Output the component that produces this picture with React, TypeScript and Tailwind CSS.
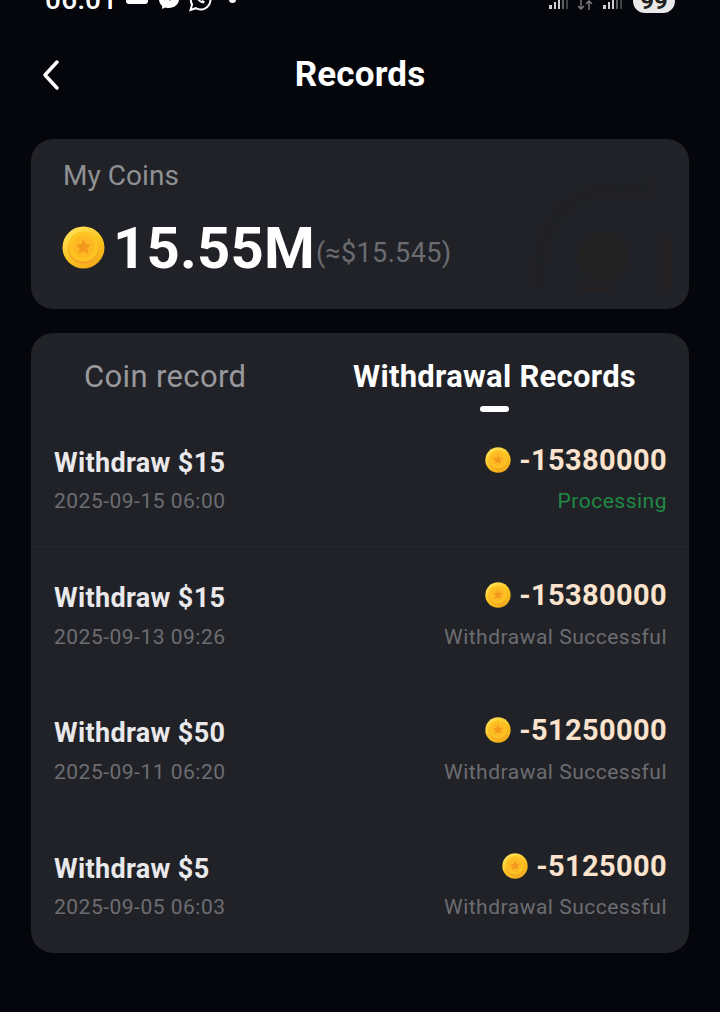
import React, { useId } from "react";

function Coin({ size }: { size: number }) {
  const id = useId().replace(/:/g, "");
  return (
    <svg width={size} height={size} viewBox="0 0 44 44" className="shrink-0">
      <defs>
        <linearGradient id={`${id}a`} x1="0.2" y1="0" x2="0.8" y2="1">
          <stop offset="0" stopColor="#ffe45c" />
          <stop offset="0.55" stopColor="#fbc21f" />
          <stop offset="1" stopColor="#f0a818" />
        </linearGradient>
      </defs>
      <circle cx="22" cy="22" r="21.5" fill={`url(#${id}a)`} />
      <circle cx="22" cy="22.500" r="16" fill="#f59f2b" />
      <circle cx="22" cy="21" r="15.500" fill="#fcc321" />
      <circle cx="22" cy="21" r="11" fill="#fdb824" />
      <path d="M22 13.500l2.400 5 5.500.7-4 3.800 1 5.400-4.900-2.600-4.900 2.600 1-5.400-4-3.800 5.500-.7z" fill="#f3981c" />
    </svg>
  );
}

function Row({ title, date, amount, status, green, h, gap, gapRight }: { title: string; date: string; amount: string; status: string; green?: boolean; h: string; gap: string; gapRight: string }) {
  return (
    <div className={`flex justify-between pl-[23px] pr-[22px] border-b border-[#26272c] last:border-b-0 ${h}`}>
      <div className="flex flex-col pt-[33px]">
        <span className="text-[27px] leading-[36px] font-bold text-[#e9e9ec] tracking-[0.35px]">{title}</span>
        <span className={`text-[21px] leading-[28px] text-[#6c6d72] tracking-[0.5px] ${gap}`}>{date}</span>
      </div>
      <div className="flex flex-col items-end pt-[30px]">
        <div className="flex items-center gap-[8px] h-[36px]">
          <Coin size={26} />
          <span className="text-[29px] leading-[36px] font-bold text-[#fbe3cd] tracking-[0.35px]">{amount}</span>
        </div>
        <span className={`text-[21px] leading-[28px] tracking-[0.5px] ${gapRight} ${green ? "text-[#1f8a45]" : "text-[#6c6d72]"}`}>{status}</span>
      </div>
    </div>
  );
}

function Signal() {
  return (
    <svg width="19" height="9" viewBox="0 0 19 9" fill="#d0d0d2">
      <rect x="0" y="5" width="3" height="4" />
      <rect x="5" y="2" width="2" height="7" />
      <rect x="9" y="0" width="2" height="9" />
      <rect x="13" y="0" width="2" height="9" opacity=".45" />
      <rect x="17" y="0" width="2" height="9" opacity=".3" />
    </svg>
  );
}

export default function App() {
  return (
    <div className="w-[720px] h-[1012px] overflow-hidden bg-[#05060c] font-['Roboto',sans-serif]">
      <div className="h-[13px] overflow-hidden flex items-start justify-between pl-[45px] pr-[45px]">
        <div className="flex items-start h-[13px]">
          <span className="text-[28px] leading-[30px] font-medium text-white mt-[-15px] tracking-[0.3px] w-[80px]">06:01</span>
          <span className="w-[22px] h-[12px] bg-white rounded-[3px] mt-[-8px] ml-[1px]" />
          <svg width="22" height="22" viewBox="0 0 24 24" fill="white" className="mt-[-12px] ml-[10px]">
            <path d="M12 1C5.800 1 1 5.500 1 11.700c0 3.200 1.300 6 3.500 7.900v3.400l3.300-1.800c1.300.4 2.700.6 4.200.6 6.200 0 11-4.500 11-10.100S18.200 1 12 1z" />
            <path d="M6 14l5-5 3 2.500L18 9l-5 5-3-2.500z" fill="#05060c" />
          </svg>
          <svg width="24" height="24" viewBox="0 0 24 24" fill="none" stroke="white" strokeWidth="2" className="mt-[-12px] ml-[8px]">
            <path d="M2.500 22l1.600-5.500A9.800 9.800 0 1 1 7.800 20.200z" />
            <path d="M8.500 8c0 4 3 7 7 7.500l1.500-2-2.500-1.500-1 1c-1.200-.5-2-1.500-2.500-2.500l1-1L11 7z" fill="white" stroke="none" />
          </svg>
          <span className="w-[7px] h-[7px] rounded-full bg-white ml-[17px] mt-[-4px]" />
        </div>
        <div className="flex items-start h-[13px]">
          <div className="mr-[8px]"><Signal /></div>
          <svg width="18" height="10" viewBox="0 0 18 10" fill="none" stroke="#77777a" strokeWidth="1.500" className="mr-[9px]">
            <path d="M5 0v9M2 6l3 3 3-3M13 10V1M10 4l3-3 3 3" />
          </svg>
          <Signal />
          <div className="w-[42px] h-[13px] bg-[#e9e9e9] rounded-b-[12px] overflow-hidden flex items-end justify-center ml-[11px]">
            <span className="text-[24px] leading-[20px] font-bold text-[#222] mb-[2px]">99</span>
          </div>
        </div>
      </div>

      <div className="relative h-[126px] flex items-center justify-center">
        <svg width="20" height="32" viewBox="0 0 20 32" fill="none" stroke="white" strokeWidth="3.500" strokeLinecap="round" strokeLinejoin="round" className="absolute left-[40px] top-[46px]">
          <path d="M17 3L5 16l12 13" />
        </svg>
        <span className="text-[35px] leading-[40px] font-bold text-white mt-[-2px] tracking-[0.15px]">Records</span>
      </div>

      <div className="mx-[31px] h-[170px] rounded-[22px] bg-[#212227] overflow-hidden relative">
        <svg width="170" height="140" viewBox="0 0 170 140" fill="none" className="absolute right-0 bottom-0">
          <path d="M18 118C20 70 35 30 84 21L134 19" stroke="#202124" strokeWidth="9" />
          <circle cx="84" cy="88" r="25" fill="#222322" />
          <path d="M60 120h30" stroke="#272123" strokeWidth="3" />
          <path d="M148 120V70" stroke="#252224" strokeWidth="10" />
        </svg>
        <div className="relative pl-[33px] pt-[19px]">
          <div className="text-[28px] leading-[36px] text-[#8f9094] tracking-[0.05px] ml-[-1px]">My Coins</div>
          <div className="flex items-end mt-[22px] ml-[-1px] h-[64px]">
            <div className="self-center mr-[8px] mt-[-2px] ml-[-1px]"><Coin size={43} /></div>
            <span className="text-[58px] leading-[64px] font-bold text-white tracking-[0.2px]">15.55M</span>
            <span className="text-[27px] leading-[34px] text-[#6b6c71] tracking-[0.35px] mb-[10px] ml-[1px]">(≈$15.545)</span>
          </div>
        </div>
      </div>

      <div className="mx-[31px] mt-[24px] h-[620px] rounded-[22px] bg-[#212227] overflow-hidden">
        <div className="h-[79px] relative">
          <span className="absolute left-[53px] top-[25px] text-[31px] leading-[38px] text-[#98999d] tracking-[0.35px]">Coin record</span>
          <span className="absolute left-[322px] top-[25px] text-[31px] leading-[38px] font-bold text-white tracking-[0.28px]">Withdrawal Records</span>
          <span className="absolute left-[449px] top-[73px] w-[29px] h-[6px] rounded-full bg-white" />
        </div>
        <Row h="h-[135px]" gap="mt-[6px]" gapRight="mt-[9px]" title="Withdraw $15" date="2025-09-15 06:00" amount="-15380000" status="Processing" green />
        <Row h="h-[135px]" gap="mt-[7px]" gapRight="mt-[10px]" title="Withdraw $15" date="2025-09-13 09:26" amount="-15380000" status="Withdrawal Successful" />
        <Row h="h-[136px]" gap="mt-[7px]" gapRight="mt-[10px]" title="Withdraw $50" date="2025-09-11 06:20" amount="-51250000" status="Withdrawal Successful" />
        <Row h="h-[135px]" gap="mt-[6px]" gapRight="mt-[9px]" title="Withdraw $5" date="2025-09-05 06:03" amount="-5125000" status="Withdrawal Successful" />
      </div>
    </div>
  );
}
